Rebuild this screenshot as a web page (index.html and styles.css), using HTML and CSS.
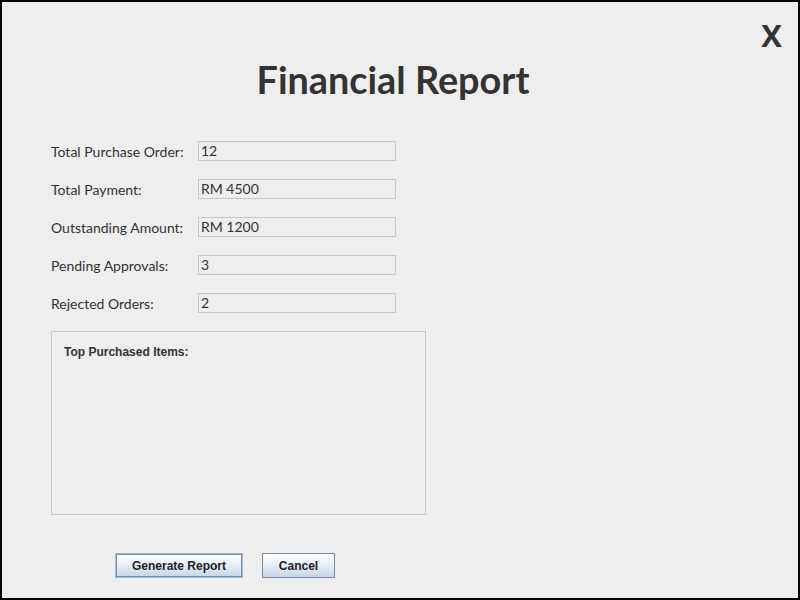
FILE: index.html
```html
<!DOCTYPE html>
<html>
<head>
<meta charset="utf-8">
<link rel="stylesheet" href="styles.css">
</head>
<body>
<div class="window">
  <div class="topbar"><span class="close">X</span></div>
  <h1 class="title">Financial Report</h1>
  <div class="rows">
    <div class="row"><span class="label">Total Purchase Order:</span><span class="field">12</span></div>
    <div class="row"><span class="label">Total Payment:</span><span class="field">RM 4500</span></div>
    <div class="row"><span class="label">Outstanding Amount:</span><span class="field">RM 1200</span></div>
    <div class="row"><span class="label">Pending Approvals:</span><span class="field">3</span></div>
    <div class="row"><span class="label">Rejected Orders:</span><span class="field">2</span></div>
  </div>
  <div class="items">
    <div class="items-title">Top Purchased Items:</div>
  </div>
  <div class="buttons">
    <button class="btn btn-primary">Generate Report</button>
    <button class="btn">Cancel</button>
  </div>
</div>
</body>
</html>
```

FILE: styles.css
```css
html, body {
  margin: 0;
  padding: 0;
  background: #eeeeee;
}
.window {
  box-sizing: border-box;
  width: 800px;
  height: 600px;
  border: 2px solid #000;
  background: #eeeeee;
  padding: 18px 16px 0 49px;
  display: flex;
  flex-direction: column;
}
.topbar {
  display: flex;
  justify-content: flex-end;
  height: 30px;
}
.close {
  font-family: "Open Sans", sans-serif;
  font-weight: 700;
  font-size: 31px;
  line-height: 30px;
  color: #333;
}
.title {
  margin: 8px 0 0 0;
  font-family: Lato, sans-serif;
  font-weight: 700;
  font-size: 37.8px;
  line-height: 44px;
  color: #333;
  text-align: center;
  padding-right: 47px;
}
.rows {
  margin-top: 39px;
  display: flex;
  flex-direction: column;
  gap: 18px;
}
.row {
  display: flex;
  align-items: center;
  height: 20px;
  font-family: Lato, sans-serif;
  font-size: 14px;
  color: #333;
}
.label {
  width: 147px;
}
.field {
  box-sizing: border-box;
  width: 198px;
  height: 20px;
  border: 1px solid #c6c6c6;
  padding: 0 2px;
  line-height: 18px;
}
.items {
  box-sizing: border-box;
  margin-top: 18px;
  width: 375px;
  height: 184px;
  border: 1px solid #c8c8c8;
  padding: 13px 12px;
}
.items-title {
  font-family: "Liberation Sans", Arial, sans-serif;
  font-weight: 700;
  font-size: 12px;
  line-height: 14px;
  color: #333;
}
.buttons {
  margin-top: 38px;
  padding-left: 64px;
  display: flex;
  gap: 19px;
}
.btn {
  box-sizing: border-box;
  height: 25px;
  font-family: "Liberation Sans", Arial, sans-serif;
  font-weight: 700;
  font-size: 12px;
  color: #222;
  border: 1px solid #7a8a99;
  background: linear-gradient(#ffffff, #e8eff6 45%, #c5d6e8);
  padding: 0;
  width: 73px;
}
.btn-primary {
  width: 128px;
  border-color: #a3b8cc;
  box-shadow: inset 0 0 0 1px #7d91a6;
}
```
